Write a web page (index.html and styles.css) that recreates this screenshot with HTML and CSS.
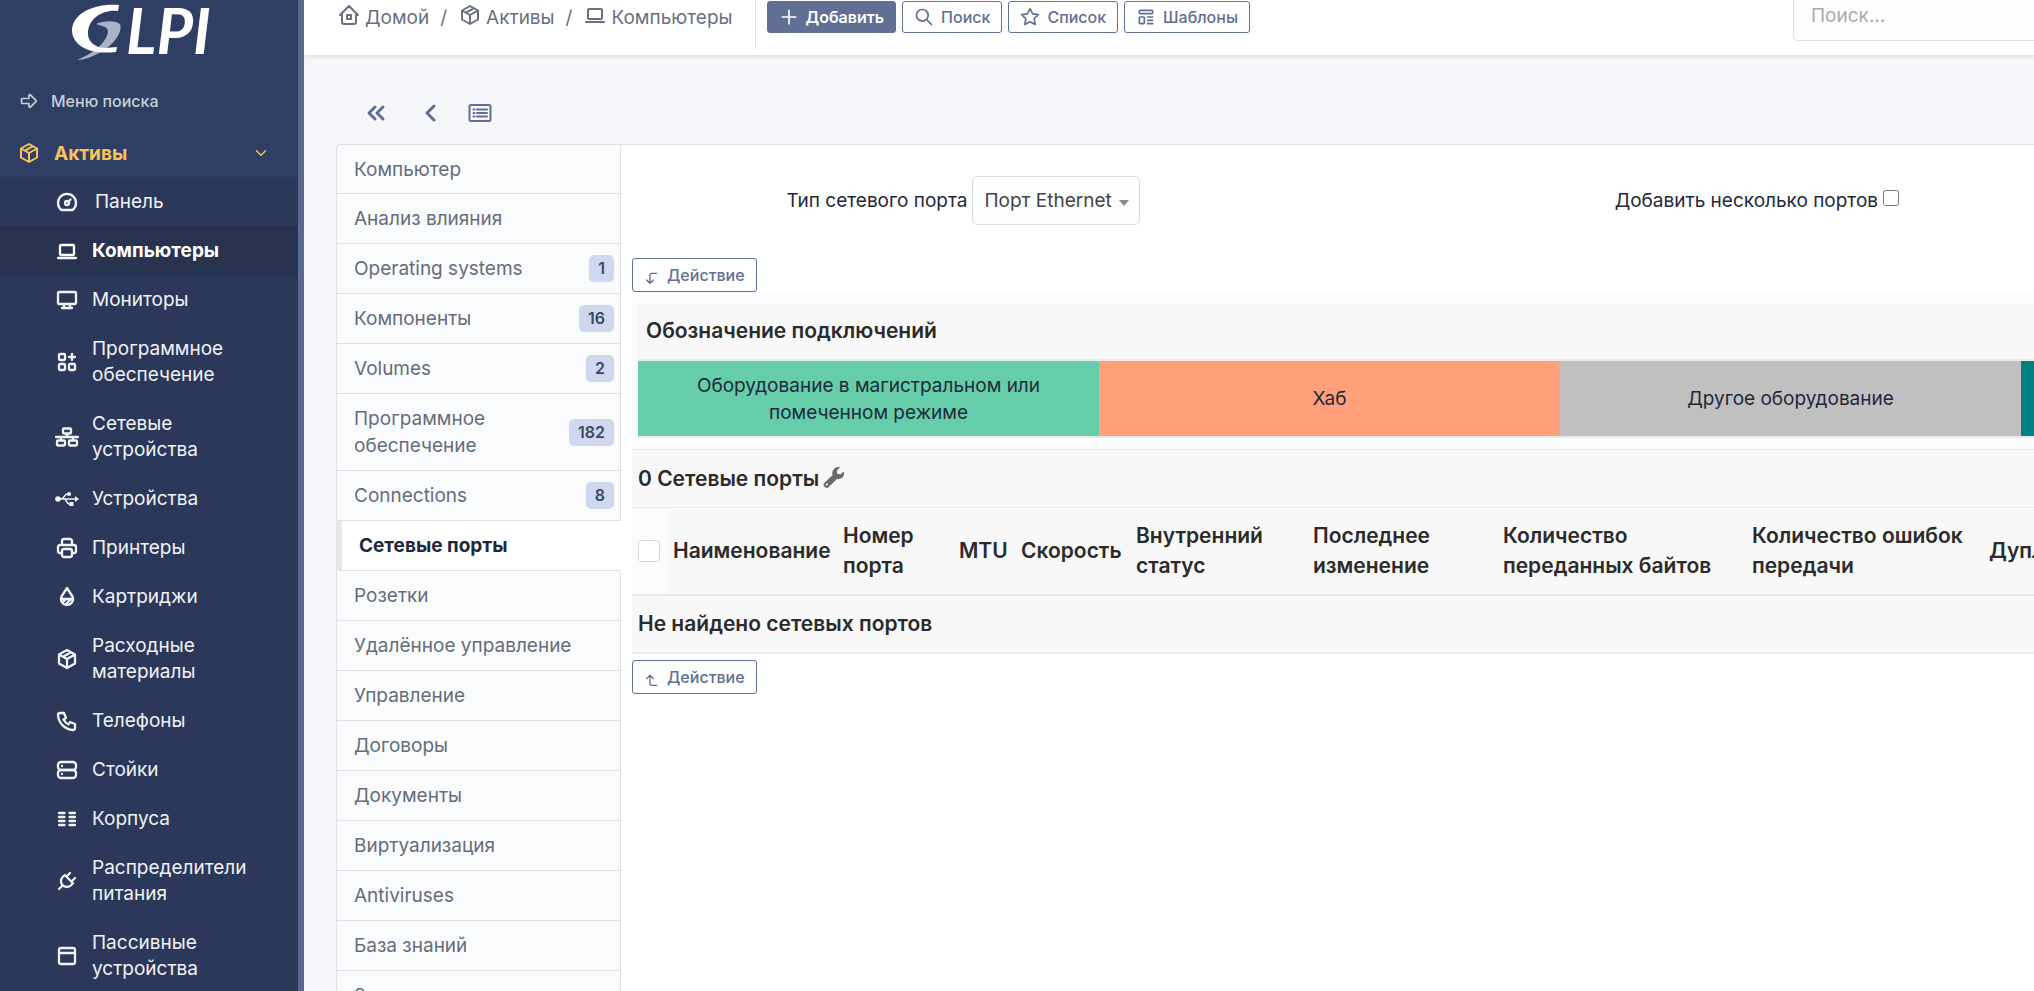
FILE: index.html
```html
<!DOCTYPE html>
<html lang="ru">
<head>
<meta charset="UTF-8">
<meta name="viewport" content="width=device-width, initial-scale=1.0">
<title>Компьютеры - GLPI</title>
<link rel="stylesheet" href="styles.css">
</head>
<body>
<!-- icons -->
<svg class="sprite" aria-hidden="true">
	<symbol id="i-arrow" viewBox="0 0 24 24"><path d="M4 9h8v-3.6a1 1 0 0 1 1.7-.7l6.6 6.6a1 1 0 0 1 0 1.4l-6.6 6.6a1 1 0 0 1-1.7-.7v-3.6h-8a1 1 0 0 1-1-1v-4a1 1 0 0 1 1-1z"/></symbol>
	<symbol id="i-package" viewBox="0 0 24 24"><path d="M12 3l8 4.5v9l-8 4.5-8-4.5v-9zM12 12l8-4.5M12 12v9M12 12L4 7.5M16 5.2l-8 4.5"/></symbol>
	<symbol id="i-dashboard" viewBox="0 0 24 24"><circle cx="12" cy="13" r="2"/><path d="M13.4 11.6l2.1-2.1M6.4 20a9 9 0 1 1 11.2 0z"/></symbol>
	<symbol id="i-laptop" viewBox="0 0 24 24"><path d="M3 19h18"/><rect x="5" y="6" width="14" height="10" rx="1"/></symbol>
	<symbol id="i-desktop" viewBox="0 0 24 24"><rect x="3" y="4" width="18" height="12" rx="1"/><path d="M7 20h10M9 16v4M15 16v4"/></symbol>
	<symbol id="i-apps" viewBox="0 0 24 24"><rect x="4" y="4" width="6" height="6" rx="1"/><rect x="4" y="14" width="6" height="6" rx="1"/><rect x="14" y="14" width="6" height="6" rx="1"/><path d="M14 7h6M17 4v6"/></symbol>
	<symbol id="i-network" viewBox="0 0 24 24"><rect x="8" y="3.500" width="8" height="5" rx="1"/><rect x="2" y="15.500" width="8" height="5" rx="1"/><rect x="14" y="15.500" width="8" height="5" rx="1"/><path d="M1 12h22M12 9v3M6 12v3M18 12v3"/></symbol>
	<symbol id="i-usb" viewBox="0 0 24 24"><path d="M3 12h18M6 12c3 0 3.500-5 6-5h2M9 12c3 0 2.500 5 5 5h2" stroke-width="1.600"/><g fill="currentColor" stroke="none"><circle cx="3" cy="12" r="2.800"/><circle cx="14" cy="7" r="2.100"/><rect x="14.500" y="15" width="4" height="4"/><path d="M20 9l4 3-4 3z"/></g></symbol>
	<symbol id="i-printer" viewBox="0 0 24 24"><path d="M17 17h2a2 2 0 0 0 2-2v-4a2 2 0 0 0-2-2H5a2 2 0 0 0-2 2v4a2 2 0 0 0 2 2h2M17 9V5a2 2 0 0 0-2-2H9a2 2 0 0 0-2 2v4"/><rect x="7" y="13" width="10" height="8" rx="2"/></symbol>
	<symbol id="i-drop" viewBox="0 0 24 24"><path d="M6.800 11a6 6 0 1 0 10.400 0L12 3zM6 14h12M7.300 17.700L11 14M10.300 19.700L16 14"/></symbol>
	<symbol id="i-phone" viewBox="0 0 24 24"><path d="M5 4h4l2 5-2.500 1.500a11 11 0 0 0 5 5L15 13l5 2v4a2 2 0 0 1-2 2A16 16 0 0 1 3 6a2 2 0 0 1 2-2"/></symbol>
	<symbol id="i-server" viewBox="0 0 24 24"><rect x="3" y="4" width="18" height="8" rx="3"/><rect x="3" y="12" width="18" height="8" rx="3"/><path d="M7 8v.01M7 16v.01"/></symbol>
	<symbol id="i-columns" viewBox="0 0 24 24"><path d="M4 6h5.500M4 10h5.500M4 14h5.500M4 18h5.500M14.500 6H20M14.500 10H20M14.500 14H20M14.500 18H20"/></symbol>
	<symbol id="i-plug" viewBox="0 0 24 24"><path d="M9.800 6l8.200 8.200-2 2.100A5.800 5.800 0 1 1 7.700 8zM4 20l3.500-3.500M15 4l-3.500 3.500M20 9l-3.500 3.500"/></symbol>
	<symbol id="i-panel" viewBox="0 0 24 24"><rect x="4" y="4" width="16" height="16" rx="2"/><path d="M4 9h16"/></symbol>
	<symbol id="i-down" viewBox="0 0 24 24"><path d="M6 9l6 6 6-6"/></symbol>
	<symbol id="i-home" viewBox="0 0 24 24"><path d="M5 12H3l9-9 9 9h-2M5 12v7a2 2 0 0 0 2 2h10a2 2 0 0 0 2-2v-7M10 12h4v4h-4z"/></symbol>
	<symbol id="i-plus" viewBox="0 0 24 24"><path d="M12 4v16M4 12h16"/></symbol>
	<symbol id="i-search" viewBox="0 0 24 24"><circle cx="10" cy="10" r="7"/><path d="M21 21l-6-6"/></symbol>
	<symbol id="i-star" viewBox="0 0 24 24"><path d="M12 17.800l-6.200 3.200 1.200-6.900-5-4.900 6.900-1L12 2l3.100 6.200 6.900 1-5 4.900 1.200 6.900z"/></symbol>
	<symbol id="i-template" viewBox="0 0 24 24"><rect x="4" y="4" width="16" height="4" rx="1"/><rect x="4" y="12" width="6" height="8" rx="1"/><path d="M14 12h6M14 16h6M14 20h6"/></symbol>
	<symbol id="i-first" viewBox="0 0 24 24"><path d="M11 6l-6 6 6 6M19 6l-6 6 6 6"/></symbol>
	<symbol id="i-prev" viewBox="0 0 24 24"><path d="M16 5l-7 7 7 7"/></symbol>
	<symbol id="i-list" viewBox="0 0 24 24"><rect x="1.500" y="4" width="21" height="16" rx="1.500"/><path d="M9 8.500h10M9 12h10M9 15.500h10M5.500 8.500h1M5.500 12h1M5.500 15.500h1"/></symbol>
	<symbol id="i-corner-down" viewBox="0 0 24 24"><path d="M19 5h-7a3 3 0 0 0-3 3v12M4 15l5 5 5-5"/></symbol>
	<symbol id="i-corner-up" viewBox="0 0 24 24"><path d="M19 20h-7a3 3 0 0 1-3-3V5M4 10l5-5 5 5"/></symbol>
	<symbol id="i-wrench" viewBox="0 0 24 24"><path fill="currentColor" stroke="none" fill-rule="evenodd" d="M22.600 5.900c.9 3.100-.1 5.700-2.100 7.200-1.600 1.200-3.600 1.500-5.300 1L6.600 22.600a3.100 3.100 0 0 1-5-4.400l8.800-8.500C9.700 7.400 10.300 5 12 3.200 14 1.300 16.400.7 18.600 1.300l-3.700 3.800.6 3.300 3.400.6zM4.200 19a1.200 1.200 0 1 0 0 2.400 1.200 1.200 0 0 0 0-2.400z"/></symbol>
</svg>

<div class="page">
	<aside class="sidebar">
		<a href="#" class="logo" aria-label="GLPI">
			<svg class="logo-mark" viewBox="0 0 50 58" aria-hidden="true">
				<path fill="#a9b2c9" d="M24 22C31 19 42 18 48 22C51 31 41 43 29 50C20 55 12 58 5 58C17 53 26 47 32 39C37 32 37 27 33 25C30 24 27 23 24 22z"/>
				<path fill="#fff" d="M47 3L46 9C31 7 17 16 16 30C15 39 23 46 33 46L45 45L44 50C20 53 1 45 0 29C0 12 21 1 47 3z"/>
			</svg>
			<span class="logo-text">LPI</span>
		</a>
		<a href="#" class="menu-search"><svg class="icon"><use href="#i-arrow"/></svg>Меню поиска</a>
		<button type="button" class="menu-section"><svg class="icon"><use href="#i-package"/></svg><span>Активы</span><svg class="icon chevron"><use href="#i-down"/></svg></button>
		<nav class="submenu">
			<a href="#" class="panel-link"><svg class="icon"><use href="#i-dashboard"/></svg>Панель</a>
			<a href="#" class="active"><svg class="icon"><use href="#i-laptop"/></svg>Компьютеры</a>
			<a href="#"><svg class="icon"><use href="#i-desktop"/></svg>Мониторы</a>
			<a href="#"><svg class="icon"><use href="#i-apps"/></svg>Программное обеспечение</a>
			<a href="#"><svg class="icon"><use href="#i-network"/></svg>Сетевые устройства</a>
			<a href="#"><svg class="icon"><use href="#i-usb"/></svg>Устройства</a>
			<a href="#"><svg class="icon"><use href="#i-printer"/></svg>Принтеры</a>
			<a href="#"><svg class="icon"><use href="#i-drop"/></svg>Картриджи</a>
			<a href="#"><svg class="icon"><use href="#i-package"/></svg>Расходные материалы</a>
			<a href="#"><svg class="icon"><use href="#i-phone"/></svg>Телефоны</a>
			<a href="#"><svg class="icon"><use href="#i-server"/></svg>Стойки</a>
			<a href="#"><svg class="icon"><use href="#i-columns"/></svg>Корпуса</a>
			<a href="#"><svg class="icon"><use href="#i-plug"/></svg>Распределители питания</a>
			<a href="#"><svg class="icon"><use href="#i-panel"/></svg>Пассивные устройства</a>
		</nav>
	</aside>

	<div class="content">
		<header class="topbar">
			<nav class="breadcrumb">
				<a href="#"><svg class="icon"><use href="#i-home"/></svg>Домой</a>
				<span>/</span>
				<a href="#"><svg class="icon"><use href="#i-package"/></svg>Активы</a>
				<span>/</span>
				<a href="#"><svg class="icon"><use href="#i-laptop"/></svg>Компьютеры</a>
			</nav>
			<div class="toolbar">
				<button type="button" class="btn btn-primary"><svg class="icon"><use href="#i-plus"/></svg>Добавить</button>
				<button type="button" class="btn"><svg class="icon"><use href="#i-search"/></svg>Поиск</button>
				<button type="button" class="btn"><svg class="icon"><use href="#i-star"/></svg>Список</button>
				<button type="button" class="btn"><svg class="icon"><use href="#i-template"/></svg>Шаблоны</button>
			</div>
			<input type="search" class="global-search" placeholder="Поиск..." aria-label="Поиск">
		</header>

		<main>
			<div class="pager">
				<a href="#" aria-label="Первый"><svg class="icon"><use href="#i-first"/></svg></a>
				<a href="#" aria-label="Предыдущий"><svg class="icon"><use href="#i-prev"/></svg></a>
				<a href="#" aria-label="Список"><svg class="icon list"><use href="#i-list"/></svg></a>
			</div>

			<div class="item">
				<nav class="tabs">
					<a href="#">Компьютер</a>
					<a href="#">Анализ влияния</a>
					<a href="#">Operating systems <span class="badge">1</span></a>
					<a href="#">Компоненты <span class="badge">16</span></a>
					<a href="#">Volumes <span class="badge">2</span></a>
					<a href="#">Программное обеспечение <span class="badge">182</span></a>
					<a href="#">Connections <span class="badge">8</span></a>
					<a href="#" class="active">Сетевые порты</a>
					<a href="#">Розетки</a>
					<a href="#">Удалённое управление</a>
					<a href="#">Управление</a>
					<a href="#">Договоры</a>
					<a href="#">Документы</a>
					<a href="#">Виртуализация</a>
					<a href="#">Antiviruses</a>
					<a href="#">База знаний</a>
					<a href="#">Заявки</a>
				</nav>

				<section class="panel">
					<div class="wide">
						<form class="add-port">
							<div class="field">
								<label for="portType">Тип сетевого порта</label>
								<div class="select">
									<select id="portType"><option>Порт Ethernet</option></select>
								</div>
							</div>
							<div class="field">
								<label for="several">Добавить несколько портов</label>
								<input type="checkbox" id="several">
							</div>
						</form>

						<button type="button" class="btn btn-action"><svg class="icon"><use href="#i-corner-down"/></svg>Действие</button>

						<div class="tables">
							<table class="legend">
								<thead>
									<tr><th colspan="4">Обозначение подключений</th></tr>
								</thead>
								<tbody>
									<tr>
										<td class="trunk">Оборудование в магистральном или помеченном режиме</td>
										<td class="hub">Хаб</td>
										<td class="other">Другое оборудование</td>
										<td class="last"></td>
									</tr>
								</tbody>
							</table>

							<table class="ports">
								<colgroup>
									<col class="c-check"><col class="c-name"><col class="c-number"><col class="c-mtu"><col class="c-speed">
									<col class="c-status"><col class="c-change"><col class="c-bytes"><col class="c-errors"><col>
								</colgroup>
								<thead>
									<tr class="title"><th colspan="10">0 Сетевые порты<svg class="icon wrench"><use href="#i-wrench"/></svg></th></tr>
									<tr class="heads">
										<th class="check"><input type="checkbox" aria-label="Выбрать все"></th>
										<th>Наименование</th>
										<th>Номер порта</th>
										<th>MTU</th>
										<th>Скорость</th>
										<th>Внутренний статус</th>
										<th>Последнее изменение</th>
										<th>Количество переданных байтов</th>
										<th>Количество ошибок передачи</th>
										<th>Дуплекс</th>
									</tr>
								</thead>
								<tbody>
									<tr class="empty"><th colspan="10">Не найдено сетевых портов</th></tr>
								</tbody>
							</table>
						</div>

						<button type="button" class="btn btn-action btn-bottom"><svg class="icon"><use href="#i-corner-up"/></svg>Действие</button>
					</div>
				</section>
			</div>
		</main>
	</div>
</div>
</body>
</html>
```

FILE: styles.css
```css
* {
	box-sizing: border-box;
}
body {
	margin: 0;
	font-family: Inter, "Noto Sans", sans-serif;
	font-size: 19px;
	line-height: 27px;
	color: #1e293b;
	background: #f5f7fb;
	overflow: hidden;
}
a {
	color: inherit;
	text-decoration: none;
}
button, input, select {
	font-family: inherit;
}
.sprite {
	display: none;
}
.icon {
	flex: none;
	width: 24px;
	height: 24px;
	fill: none;
	stroke: currentColor;
	stroke-width: 2;
	stroke-linecap: round;
	stroke-linejoin: round;
}
.page {
	display: flex;
	height: 100vh;
}

/* sidebar */
.sidebar {
	flex: none;
	width: 304px;
	overflow: hidden;
	border-right: 6px solid #596990;
	background: #2f3f64;
	color: #f1f3f8;
}
.logo {
	display: flex;
	gap: 4px;
	height: 77px;
	padding: 2px 0 0 72px;
	color: #fff;
}
.logo-mark {
	width: 50px;
	height: 58px;
}
.logo-text {
	font: italic bold 63px/56px Lato, sans-serif;
}
.menu-search {
	display: flex;
	align-items: center;
	gap: 12px;
	height: 48px;
	padding-left: 19px;
	font-size: 16px;
	font-weight: 500;
	color: #c8cdd9;
}
.menu-search .icon {
	width: 20px;
	height: 20px;
}
.menu-section {
	display: flex;
	align-items: center;
	gap: 13px;
	width: 100%;
	height: 52px;
	padding: 4px 28px 0 17px;
	border: 0;
	background: none;
	color: #f8c35c;
	font-size: 19px;
	font-weight: 700;
}
.menu-section .chevron {
	width: 18px;
	height: 18px;
	margin-left: auto;
}
.submenu {
	min-height: 100%;
	background: #2b3859;
}
.submenu a {
	display: flex;
	align-items: center;
	gap: 13px;
	padding: 12px 40px 11px 55px;
	line-height: 26px;
}
.submenu .panel-link {
	gap: 16px;
}
.submenu .icon {
	stroke-width: 2.3;
}
.submenu .active {
	background: #27334f;
	font-weight: 700;
	color: #fff;
}

/* top bar */
.content {
	flex: 1;
	min-width: 0;
	overflow: hidden;
}
.topbar {
	display: flex;
	align-items: flex-start;
	height: 55px;
	padding-left: 33px;
	background: #fff;
	box-shadow: 0 1px 6px rgba(30, 41, 59, 0.16);
}
.breadcrumb {
	display: flex;
	gap: 11px;
	height: 49px;
	padding: 4px 22px 0 0;
	border-right: 1px solid #e2e4e8;
	color: #68707f;
}
.breadcrumb a {
	display: flex;
	gap: 4px;
}
.breadcrumb .icon {
	margin-top: -1px;
}
.toolbar {
	display: flex;
	gap: 6px;
	padding: 1px 0 0 11px;
}
.btn {
	display: flex;
	align-items: center;
	gap: 7px;
	height: 32px;
	padding: 0 11px;
	border: 1px solid #626f94;
	border-radius: 3px;
	background: #fff;
	color: #626f94;
	font-size: 16px;
	font-weight: 500;
}
.btn .icon {
	width: 20px;
	height: 20px;
}
.btn-primary {
	background: #626f94;
	color: #fff;
	font-weight: 600;
}
.global-search {
	width: 241px;
	height: 41px;
	margin-left: auto;
	padding: 0 17px 9px;
	border: solid #dadcdf;
	border-width: 0 0 1px 1px;
	border-radius: 0 0 0 5px;
	background: #fdfdfd;
	font-size: 19px;
}
.global-search::placeholder {
	color: #a5abb5;
}

/* item */
.pager {
	display: flex;
	gap: 30px;
	padding: 46px 0 19px 60px;
	color: #626f94;
}
.pager .icon {
	display: block;
	stroke-width: 3;
}
.pager .list {
	stroke-width: 2;
}
.pager a:last-child {
	margin-left: -4px;
}
.item {
	display: flex;
	align-items: stretch;
	margin-left: 32px;
	min-height: 100vh;
}
.tabs {
	flex: none;
	width: 285px;
	border: 1px solid #dfe1e4;
	border-right: 0;
	border-radius: 5px 0 0 0;
	background: #fafbfd;
	color: #656d7a;
}
.tabs a {
	display: flex;
	align-items: center;
	justify-content: space-between;
	padding: 11px 6px 11px 17px;
	border-right: 1px solid #dfe1e4;
	border-bottom: 1px solid #dfe1e4;
}
.tabs a:first-child {
	padding-bottom: 10px;
}
.tabs .active {
	border-left: 5px solid #e6e7e9;
	border-right-color: #fff;
	background: #fff;
	font-weight: 700;
	color: #1e293b;
}
.badge {
	flex: none;
	height: 27px;
	padding: 0 9px;
	border-radius: 5px;
	background: #d0d8ef;
	color: #3d4763;
	font-size: 16px;
	font-weight: 600;
}
.panel {
	flex: 1;
	min-width: 0;
	overflow: hidden;
	padding: 31px 0 0 11px;
	border-top: 1px solid #dfe1e4;
	background: #fff;
}
.wide {
	min-width: 1856px;
}
.add-port {
	display: grid;
	grid-template-columns: 5fr 7fr 2fr;
	height: 82px;
}
.field {
	display: flex;
	justify-content: center;
	gap: 5px;
	height: 48px;
	align-items: center;
}
.field input {
	width: 16px;
	height: 16px;
	margin: 0 4px 4px 0;
}
.select {
	position: relative;
}
.select::after {
	content: "";
	position: absolute;
	right: 11px;
	top: 24px;
	border: 5px solid transparent;
	border-top: 6px solid #888;
	border-bottom: 0;
	pointer-events: none;
}
.select select {
	appearance: none;
	height: 49px;
	padding: 0 27px 0 11px;
	border: 1px solid #dadcdf;
	border-radius: 5px;
	background: #fdfdfd;
	color: #444;
	font-size: 19px;
}
.btn-action {
	height: 34px;
	padding: 0 11px;
}
.btn-action .icon {
	width: 16px;
	height: 16px;
	margin-top: 6px;
}
.btn-bottom {
	margin-top: 6px;
}

/* tables */
.tables {
	padding-top: 11px;
	background: #fafbfd;
}
table {
	border-collapse: separate;
	border-spacing: 0;
	table-layout: fixed;
	width: 100%;
}
th {
	padding: 0 6px;
	background: #f8f8f8;
	color: #2b2b2b;
	font-size: 21px;
	font-weight: 600;
	line-height: 30px;
	text-align: left;
}
.legend {
	width: auto;
	margin: 0 6px 11px;
	min-width: calc(100% - 12px);
}
.legend th {
	height: 58px;
	padding-left: 8px;
	border-bottom: 2px solid #ededed;
}
.legend td {
	width: 25%;
	height: 77px;
	padding: 0 40px;
	border-bottom: 2px solid #e8e8ea;
	background-clip: padding-box;
	text-align: center;
}
.trunk {
	background: #66cdaa;
}
.hub {
	background: #ffa07a;
}
.other {
	background: #c0c0c0;
}
.last {
	background: #008080;
}
.title th {
	height: 59px;
	border-top: 1px solid #ebebec;
	border-bottom: 1px solid #ebebec;
}
.heads th {
	height: 88px;
	border-bottom: 2px solid #ebebec;
}
.heads .check {
	background: #fafbfd;
}
.check input {
	appearance: none;
	display: block;
	width: 22px;
	height: 22px;
	margin: 0;
	border: 1px solid #d5d8dc;
	border-radius: 4px;
	background: #fff;
}
.empty th {
	height: 58px;
	border-bottom: 2px solid #ebebec;
}
.wrench {
	width: 22px;
	height: 22px;
	margin-left: 4px;
	vertical-align: -2px;
	color: #6b6b6b;
}
.c-check {
	width: 35px;
}
.c-name {
	width: 170px;
}
.c-number {
	width: 116px;
}
.c-mtu {
	width: 62px;
}
.c-speed {
	width: 115px;
}
.c-status {
	width: 177px;
}
.c-change {
	width: 190px;
}
.c-bytes {
	width: 249px;
}
.c-errors {
	width: 237px;
}
```
